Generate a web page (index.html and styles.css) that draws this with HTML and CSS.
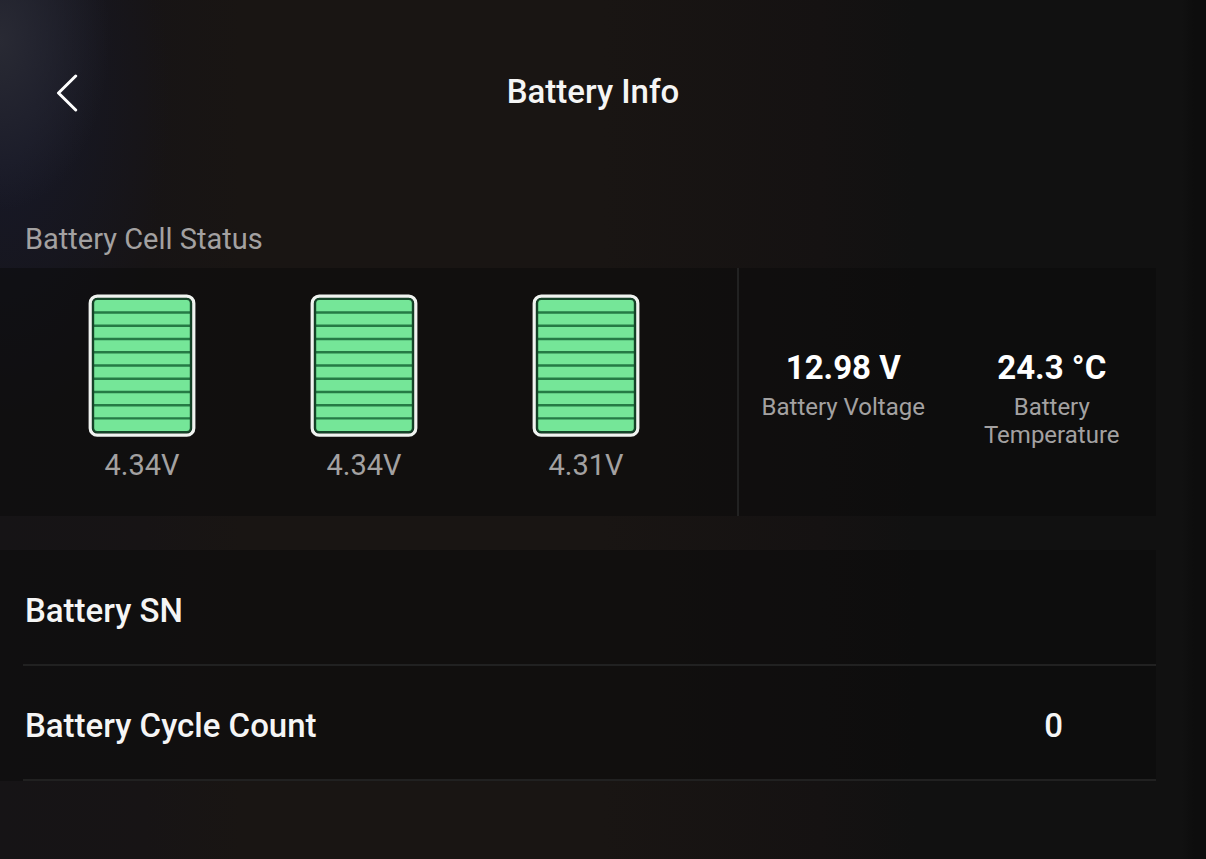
FILE: index.html
```html
<!DOCTYPE html>
<html lang="en">
<head>
<meta charset="utf-8">
<meta name="viewport" content="width=device-width, initial-scale=1">
<title>Battery Info</title>
<link rel="stylesheet" href="styles.css">
</head>
<body>
<svg class="defs" aria-hidden="true">
  <symbol id="cell" viewBox="0 0 108 144">
    <rect x="2.2" y="2.2" width="103.6" height="139" rx="7" fill="#0d2416" stroke="#f0f3f0" stroke-width="3.2"/>
    <rect x="6" y="5.5" width="96" height="132" rx="3" fill="#75e698"/>
    <path d="M5 18.5H103M5 31.8H103M5 45H103M5 58.2H103M5 71.5H103M5 84.7H103M5 98H103M5 111.2H103M5 124.4H103" stroke="#257a45" stroke-width="2.4"/>
    <rect x="5.2" y="5" width="97.6" height="133" rx="4" fill="none" stroke="#154529" stroke-width="2"/>
  </symbol>
</svg>
<div class="page">
  <header class="header">
    <button class="back" type="button" aria-label="Back">
      <svg class="back-icon" viewBox="0 0 24 40" aria-hidden="true"><path d="M19.7 4 2.5 21 19.7 38"/></svg>
    </button>
    <h1 class="title">Battery Info</h1>
  </header>
  <main class="content">
    <h2 class="section-title">Battery Cell Status</h2>
    <section class="status">
      <div class="cells">
        <div class="cell"><svg class="cell-icon" aria-hidden="true"><use href="#cell"/></svg><span class="cell-value">4.34V</span></div>
        <div class="cell"><svg class="cell-icon" aria-hidden="true"><use href="#cell"/></svg><span class="cell-value">4.34V</span></div>
        <div class="cell"><svg class="cell-icon" aria-hidden="true"><use href="#cell"/></svg><span class="cell-value">4.31V</span></div>
      </div>
      <dl class="metrics">
        <div class="metric"><dt class="metric-label">Battery Voltage</dt><dd class="metric-value">12.98 V</dd></div>
        <div class="metric"><dt class="metric-label">Battery Temperature</dt><dd class="metric-value">24.3 °C</dd></div>
      </dl>
    </section>
    <dl class="details">
      <div class="row"><dt>Battery SN</dt><dd></dd></div>
      <div class="row"><dt>Battery Cycle Count</dt><dd>0</dd></div>
    </dl>
  </main>
</div>
</body>
</html>
```
FILE: styles.css
```css
* {
  box-sizing: border-box;
}

body {
  margin: 0;
  min-height: 100vh;
  font-family: Roboto, "Liberation Sans", sans-serif;
  color: #f5f5f5;
  background:
    radial-gradient(ellipse 110px 170px at 0 40px, #292a34, rgba(41, 42, 52, 0)),
    radial-gradient(ellipse 170px 330px at 0 100px, #171826 20%, rgba(23, 24, 38, 0)),
    linear-gradient(90deg, #161416 0, #171415 12%, #191513 20%, #191513 50%, #151212 68%, #111 76%, #111 98%, #0d0d0d 99%);
}

.defs {
  position: absolute;
  width: 0;
  height: 0;
}

h1, h2, dl, dd {
  margin: 0;
}

.page {
  padding-right: 50px;
}

.header {
  display: grid;
  grid-template-columns: 80px 1fr 50px;
  align-items: center;
  height: 184px;
}

.back {
  display: flex;
  justify-content: flex-end;
  padding: 0;
  border: 0;
  background: none;
}

.back-icon {
  width: 24px;
  height: 40px;
  fill: none;
  stroke: #fff;
  stroke-width: 3;
  stroke-linecap: round;
  stroke-linejoin: round;
}

.title {
  font-size: 33px;
  line-height: 40px;
  font-weight: 500;
  text-align: center;
}

.section-title {
  padding: 35px 25px 9px;
  font-size: 29px;
  line-height: 40px;
  font-weight: 400;
  color: #a3a1a1;
}

.status {
  display: grid;
  grid-template-columns: 739fr 417fr;
  height: 248px;
  background: rgba(9, 9, 10, 0.5);
}

.cells {
  display: grid;
  grid-template-columns: repeat(3, 1fr);
  padding: 26px 40px 0 31px;
  border-right: 2px solid #222;
}

.cell {
  display: flex;
  flex-direction: column;
  align-items: center;
  gap: 7px;
}

.cell-icon {
  width: 108px;
  height: 144px;
}

.cell-value {
  font-size: 29px;
  line-height: 40px;
  color: #a3a1a1;
}

.metrics {
  display: grid;
  grid-template-columns: repeat(2, 1fr);
  padding-top: 78px;
}

.metric {
  display: flex;
  flex-direction: column-reverse;
  justify-content: flex-end;
  gap: 3px;
  padding: 0 20px;
  text-align: center;
}

.metric-value {
  font-size: 33px;
  line-height: 44px;
  font-weight: 700;
  color: #fff;
}

.metric-label {
  font-size: 24px;
  line-height: 28px;
  color: #a3a1a1;
}

.details {
  margin-top: 34px;
  padding: 1px 0 0 23px;
  background: rgba(9, 9, 10, 0.5);
}

.row {
  display: flex;
  justify-content: space-between;
  align-items: center;
  height: 115px;
  padding: 7px 93px 0 2px;
  border-bottom: 2px solid #212121;
  font-size: 33px;
  line-height: 40px;
  font-weight: 500;
}
```
